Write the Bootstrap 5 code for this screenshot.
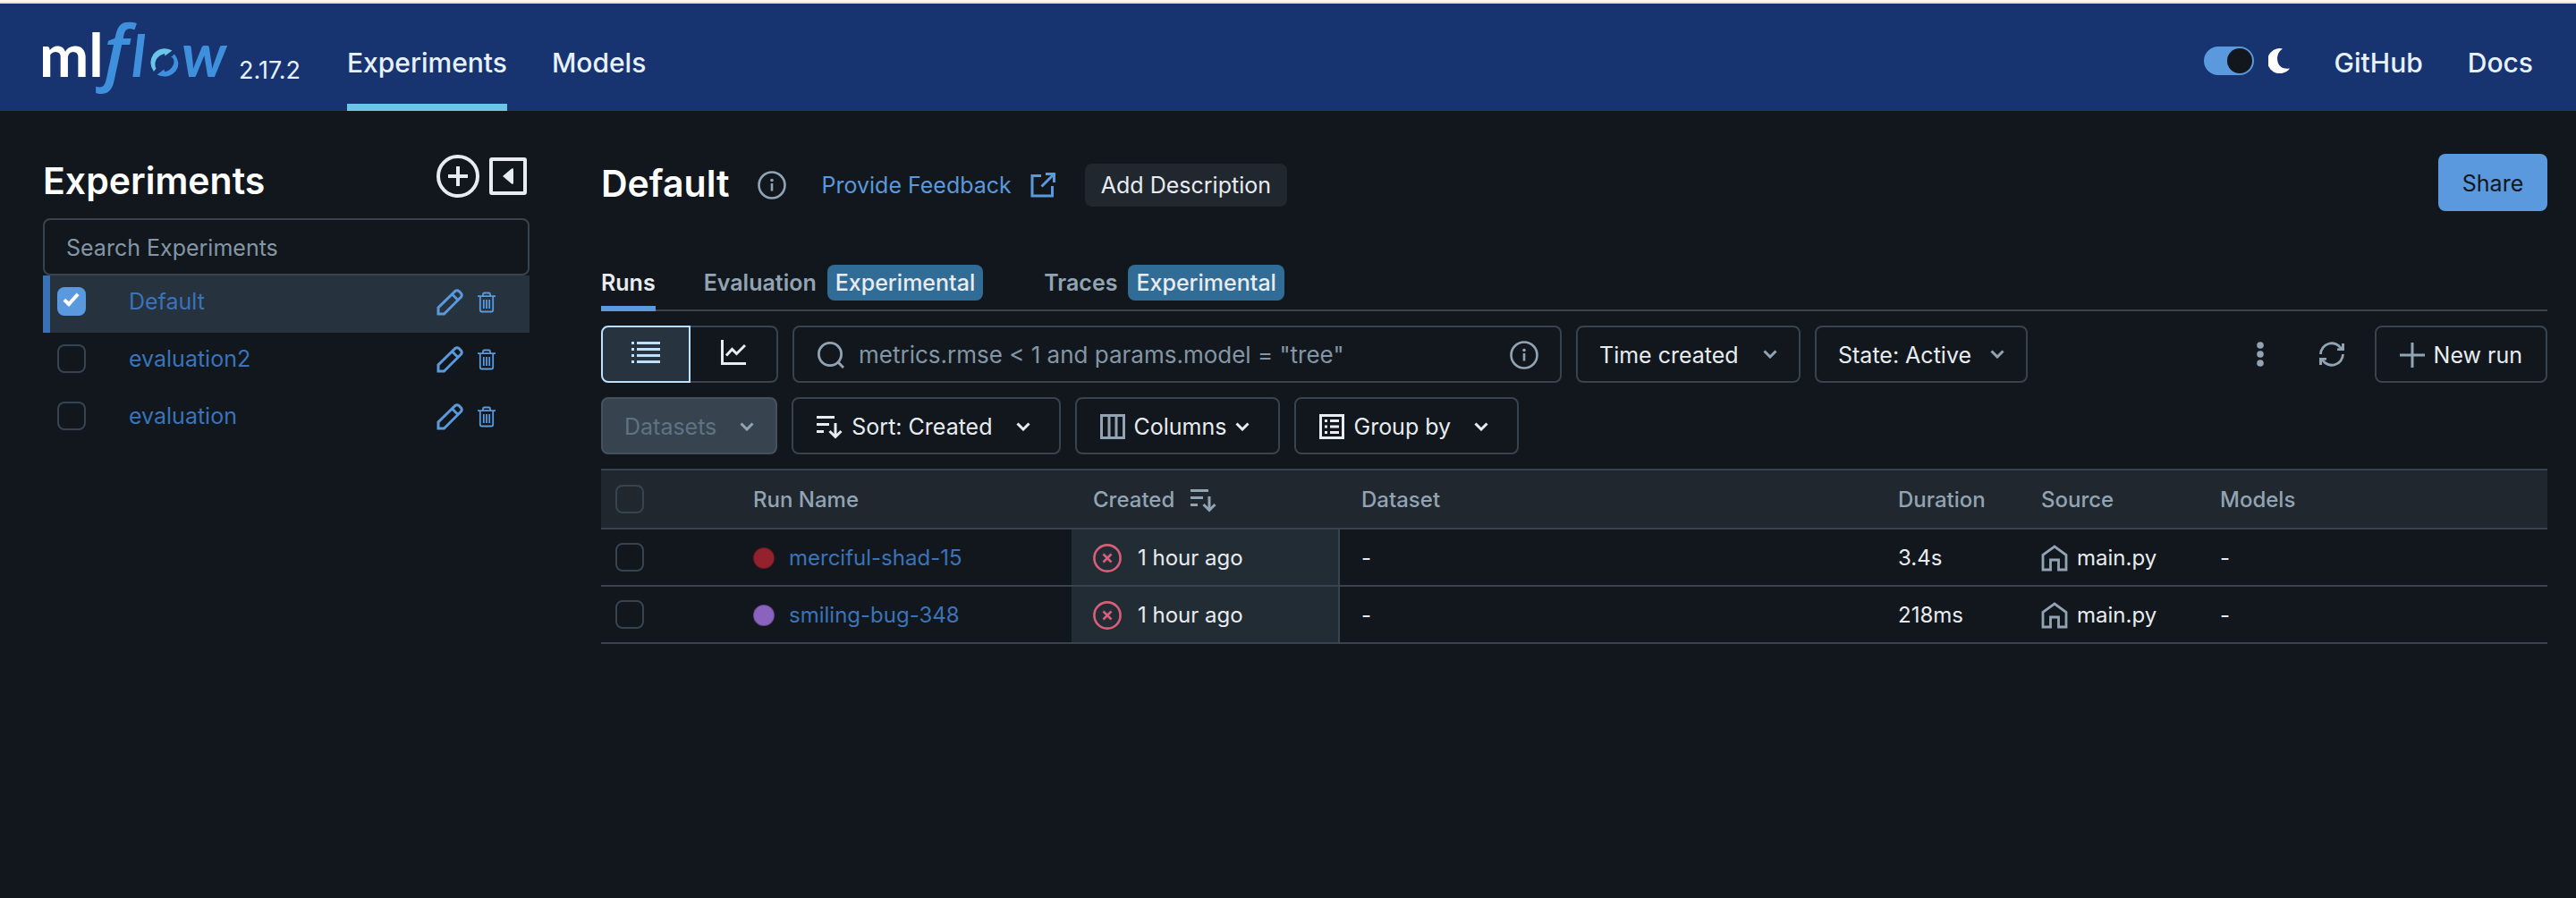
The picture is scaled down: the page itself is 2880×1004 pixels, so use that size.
<!DOCTYPE html>
<html lang="en" data-bs-theme="dark">
<head>
<meta charset="utf-8">
<meta name="viewport" content="width=device-width, initial-scale=1">
<title>MLflow - Experiments</title>
<link href="https://cdn.jsdelivr.net/npm/bootstrap@5.3.0/dist/css/bootstrap.min.css" rel="stylesheet">
<style>
  :root { --bg:#11171c; --line:#37444f; --ink:#e8ecf0; --muted:#92a4b3; --blue:#5a99dd; --link:#3b73b9; --panel:#20272e; }
  body { background:var(--bg); color:var(--ink); font-family:Inter,"Noto Sans",sans-serif; font-size:25px; line-height:32px; }
  svg { display:block; flex:none; }
  a { text-decoration:none; }
  .ico { fill:none; stroke:currentColor; stroke-width:4; }

  .topbar { height:124px; background:#183470; border-top:2px solid #fdf9ee; box-shadow:inset 0 2px #e8dfcf; padding:2px 48px 0 40px; }
  .brandbox { width:348px; }
  .brandbox svg { overflow:visible; }
  .version { font-size:27px; padding:59px 0 0 11px; color:#e7f1fb; }
  .topbar .toplink { color:#e7f1fb; font-size:30px; font-weight:500; line-height:40px; padding:46px 0 26px; border-bottom:8px solid transparent; }
  .topbar .toplink.active { border-color:#6bc5e8; }
  .topnav { gap:50px; }
  .modebox { padding-top:48px; }
  .mode { width:56px; height:32px; appearance:none; background:var(--blue); border-radius:16px; margin:0; display:block; }
  .mode::after { content:""; display:block; width:28px; height:28px; border-radius:50%; background:var(--bg); margin:2px 2px 0 26px; }

  .page { padding:48px 32px 0 48px; gap:80px; }
  .side { width:544px; flex:none; }
  h1, h2 { font-size:41px; font-weight:600; line-height:60px; margin:0; }
  .sidehead { height:72px; }
  .plainbtn { background:none; border:0; padding:0; color:inherit; display:block; }
  .soft { color:var(--muted); }
  .box { height:64px; border:2px solid var(--line); border-radius:8px; background:transparent; color:var(--ink); font-size:25px; line-height:32px; }
  .box::placeholder, .searchbox input::placeholder { color:#8496a5; opacity:1; }
  input.box { padding:2px 24px 0; width:100%; display:block; }
  .exp { height:64px; padding:0 38px 6px 8px; border-left:8px solid transparent; }
  .exp.active { background:#26323d; border-color:#3a70b4; }
  .exp label { margin-left:48px; color:var(--link); }
  .runs a { color:var(--link); }
  .exp .plainbtn { color:var(--blue); padding-top:2px; }
  .tick { appearance:none; width:32px; height:32px; border:2px solid var(--line); border-radius:8px; margin:0; display:block; flex:none; background:transparent; }
  .tick:checked { background:var(--blue); border-color:var(--blue); }
  .tick:checked::after { content:""; display:block; width:9px; height:17px; margin:2px 0 0 9px; border:solid #fff; border-width:0 4px 4px 0; transform:rotate(42deg); }

  .titlerow { height:64px; padding-top:2px; }
  .titlerow > :not(h1) { margin-top:4px; }
  .titlerow .plainbtn { margin-left:31px; margin-right:40px; }
  .feedback { color:var(--blue); gap:20px; }
  .desc { height:48px; margin-left:32px; padding:0 18px; background:var(--panel); border:0; border-radius:8px; color:var(--ink); }
  .share { width:122px; height:64px; padding-top:2px; background:var(--blue); border:0; border-radius:8px; color:var(--bg); }
  .tabbar { margin-top:54px; border-bottom:2px solid var(--line); gap:54px; }
  .tabbar .tab { height:58px; margin-bottom:-2px; border:0; border-bottom:6px solid transparent; background:none; padding:0; font-weight:600; color:var(--muted); display:flex; align-items:center; gap:12px; }
  .tabbar .tab.active { color:var(--ink); border-color:var(--blue); }
  .chip { background:#316c96; color:var(--ink); font-weight:500; height:40px; line-height:40px; border-radius:8px; padding:0 9px; margin-right:14px; }

  .tools { gap:16px; margin-top:16px; }
  .tools .box { display:flex; align-items:center; padding:2px 24px 0; white-space:nowrap; }
  .tools button.box { padding:2px 26px 0; }
  .tools .box > .lead-ico { margin-right:10px; }
  .chev { margin-left:26px; }
  .tools button.wideend { padding-right:32px; }
  .tools .near { margin-left:10px; }
  .seg { width:198px; }
  .tools .seg .box { flex:1; justify-content:center; padding:0; border-radius:0 8px 8px 0; border-left:0; }
  .tools .seg .box.active { border:2px solid #bde1fd; border-radius:8px 0 0 8px; background:#283340; color:#bde1fd; }
  .tools .searchbox { flex:0 1 860px; padding-left:26px; color:var(--muted); }
  .searchbox input { flex:1; min-width:0; background:none; border:0; color:var(--ink); padding:0 0 0 16px; outline:0; font-size:26px; }
  .pick { display:grid; align-items:center; }
  .pick > * { grid-area:1/1; }
  .tools .pick select { appearance:none; padding-right:67px; }
  .tools .pick.tight select { padding-right:60px; }
  .pick .chev { justify-self:end; margin-right:26px; color:var(--muted); pointer-events:none; }
  .tools .box:disabled { background:var(--line); border-color:#45525e; color:#5f7281; opacity:1; padding:2px 24px 0; }
  .sq { width:64px; height:64px; display:flex; align-items:center; justify-content:center; color:var(--muted); }

  .runs { width:100%; table-layout:fixed; border-collapse:separate; border-spacing:0; margin-top:16px; font-size:24px; }
  .runs th, .runs td { padding:2px 0 0 24px; vertical-align:middle; border-bottom:2px solid var(--line); }
  .runs th { height:68px; background:var(--panel); border-top:2px solid var(--line); font-weight:500; color:var(--muted); }
  .runs td { height:64px; }
  .runs .pickcol { padding:0 0 0 16px; width:146px; }
  .runs .created { background:#222c35; border-right:2px solid var(--line); }
  .wname { width:380px; } .wcreated { width:300px; } .wdata { width:600px; } .wdur { width:160px; } .wsrc { width:200px; }
  .cell { display:flex; align-items:center; gap:18px; }
  .cell.snug { gap:10px; }
  .dot { width:24px; height:24px; border-radius:50%; border:1px solid #0004; }
  .failico { color:#d95f78; }
</style>
<script src="https://cdn.jsdelivr.net/npm/bootstrap@5.3.0/dist/js/bootstrap.bundle.min.js"></script>
</head>
<body>
<svg width="0" height="0" class="position-absolute" aria-hidden="true">
  <symbol id="pencil" viewBox="0 0 30 30"><path d="M2 28v-7L21 2.500q2-1.500 4 0l2.500 2.500q1.500 2 0 4L8.500 28zM17.500 6l6.500 6.500" fill="none" stroke="currentColor" stroke-width="3"/></symbol>
  <symbol id="trash" viewBox="0 0 20 24"><path d="M0 5.200h20M6 5V3q0-1.500 1.500-1.500h5Q14 1.500 14 3v2M2.800 6v14.500q0 2 2 2h10.400q2 0 2-2V6M6.800 9v10M10 9v10M13.200 9v10" fill="none" stroke="currentColor" stroke-width="1.800"/></symbol>
  <symbol id="info" viewBox="0 0 32 32"><circle cx="16" cy="16" r="14.500" fill="none" stroke="currentColor" stroke-width="2.600"/><path d="M16 14v8.500" stroke="currentColor" stroke-width="2.600"/><circle cx="16" cy="10.500" r="1.800" fill="currentColor"/></symbol>
  <symbol id="chev" viewBox="0 0 16 10"><path d="M1.500 1.500L8 8l6.500-6.500" fill="none" stroke="currentColor" stroke-width="3"/></symbol>
  <symbol id="sort" viewBox="0 0 29 28"><path d="M0 3.500h20M0 11.500h14M0 19.500h8M21 10v15M14.500 19l6.500 6.500 6.500-6.500" fill="none" stroke="currentColor" stroke-width="3"/></symbol>
  <symbol id="fail" viewBox="0 0 32 32"><circle cx="16" cy="16" r="14.600" fill="none" stroke="currentColor" stroke-width="2.600"/><path d="M11.500 11.500l9 9M20.500 11.500l-9 9" stroke="currentColor" stroke-width="2.600"/></symbol>
  <symbol id="home" viewBox="0 0 30 30"><path d="M2 28V11.500L15 2l13 9.500V28h-8.500V17h-9v11z" fill="none" stroke="currentColor" stroke-width="2.800"/></symbol>
</svg>

<header class="topbar d-flex">
  <div class="brandbox d-flex align-items-start">
    <svg width="216" height="116" viewBox="40 4 216 116" role="img" aria-label="mlflow">
      <g font-family="Lato" font-weight="700">
        <text x="44" y="86" font-size="66" fill="#fff">ml</text>
        <g fill="#3f90dc">
          <text x="116" y="86" font-size="80" font-family="Open Sans" font-style="italic" font-weight="600">f</text>
          <text x="147" y="86" font-size="65" font-style="italic">l</text>
          <text x="203" y="86" font-size="68" font-style="italic">w</text>
        </g>
      </g>
      <path d="M172 80 Q165 70 171.500 60.500 Q180 50.500 192.500 56.500 L184.500 62.500 L184 60 Q178 61.500 175 66 Q172 71.500 174.500 76.500z" fill="#6bc5e8"/>
      <path d="M195 60.500 Q203 70.500 196.500 79.500 Q188 89 175.500 83.500 L183.500 77.500 L184 80.300 Q190 79.500 193 74 Q196 69 193 64.500 L191 64z" fill="#3f90dc"/>
    </svg>
    <span class="version">2.17.2</span>
  </div>
  <nav class="topnav d-flex align-items-start">
    <a class="toplink active" href="#">Experiments</a>
    <a class="toplink" href="#">Models</a>
  </nav>
  <nav class="topnav d-flex align-items-start ms-auto">
    <div class="modebox d-flex align-items-center gap-3">
      <input type="checkbox" class="mode" role="switch" aria-label="Dark mode" checked>
      <svg width="24" height="28" viewBox="0 0 24 28"><path d="M16 .500A14 14 0 1 0 24 22.500Q10 24 10 10.500Q10.500 4 16 .500z" fill="#fff"/></svg>
    </div>
    <a class="toplink" href="#">GitHub</a>
    <a class="toplink" href="#">Docs</a>
  </nav>
</header>

<div class="page d-flex align-items-start">
  <aside class="side">
    <div class="sidehead d-flex justify-content-between align-items-start">
      <h2>Experiments</h2>
      <div class="d-flex align-items-center gap-2">
        <button class="plainbtn" aria-label="New experiment"><svg width="50" height="50" viewBox="0 0 50 50"><circle cx="24" cy="25" r="22" class="ico"/><path d="M24 14v22M13 25h22" class="ico"/></svg></button>
        <button class="plainbtn" aria-label="Collapse sidebar"><svg width="46" height="50" viewBox="0 0 46 50"><rect x="3" y="6" width="38" height="38" rx="1" class="ico"/><path d="M16 25l10-8.500q2-1 2 1v15q0 2-2 1z" fill="currentColor"/></svg></button>
      </div>
    </div>
    <input class="box" type="text" placeholder="Search Experiments" aria-label="Search Experiments">
    <div class="exp active d-flex align-items-center">
      <input class="tick" type="checkbox" id="e0" checked><label for="e0">Default</label>
      <button class="plainbtn ms-auto" aria-label="Rename"><svg width="30" height="30"><use href="#pencil"/></svg></button>
      <button class="plainbtn ms-3" aria-label="Delete"><svg width="20" height="24"><use href="#trash"/></svg></button>
    </div>
    <div class="exp d-flex align-items-center">
      <input class="tick" type="checkbox" id="e1"><label for="e1">evaluation2</label>
      <button class="plainbtn ms-auto" aria-label="Rename"><svg width="30" height="30"><use href="#pencil"/></svg></button>
      <button class="plainbtn ms-3" aria-label="Delete"><svg width="20" height="24"><use href="#trash"/></svg></button>
    </div>
    <div class="exp d-flex align-items-center">
      <input class="tick" type="checkbox" id="e2"><label for="e2">evaluation</label>
      <button class="plainbtn ms-auto" aria-label="Rename"><svg width="30" height="30"><use href="#pencil"/></svg></button>
      <button class="plainbtn ms-3" aria-label="Delete"><svg width="20" height="24"><use href="#trash"/></svg></button>
    </div>
  </aside>

  <main class="flex-grow-1">
    <div class="d-flex align-items-start">
      <div class="titlerow d-flex align-items-center">
        <h1>Default</h1>
        <button class="plainbtn soft" aria-label="Info"><svg width="32" height="32"><use href="#info"/></svg></button>
        <a class="feedback d-flex align-items-center" href="#">Provide Feedback
          <svg width="30" height="30" viewBox="0 0 30 30"><path d="M13 4.500H3V27h22.500V16M18 2.500h9.500V12M27 3L13.500 16.500" fill="none" stroke="currentColor" stroke-width="3"/></svg></a>
        <button class="desc">Add Description</button>
      </div>
      <button class="share ms-auto">Share</button>
    </div>

    <div class="tabbar d-flex" role="tablist">
      <button class="tab active" role="tab">Runs</button>
      <button class="tab" role="tab">Evaluation <span class="chip">Experimental</span></button>
      <button class="tab" role="tab">Traces <span class="chip">Experimental</span></button>
    </div>

    <div class="tools d-flex">
      <div class="seg d-flex" role="group" aria-label="View">
        <button class="box active" aria-label="Table view"><svg width="32" height="32" viewBox="0 0 32 32"><path d="M0 3.500h3M0 10.500h3M0 17.500h3M0 24.500h3M6 3.500h26M6 10.500h26M6 17.500h26M6 24.500h26" stroke="currentColor" stroke-width="3"/></svg></button>
        <button class="box" aria-label="Chart view"><svg width="28" height="32" viewBox="0 0 28 32"><path d="M1.500 0v26.500H28M6 17.500l6.500-7 5 5L27 6" fill="none" stroke="currentColor" stroke-width="3"/></svg></button>
      </div>
      <div class="box searchbox">
        <svg width="30" height="32" viewBox="0 0 30 32"><circle cx="14" cy="15" r="12.600" fill="none" stroke="currentColor" stroke-width="2.800"/><path d="M23 24l6 6" stroke="currentColor" stroke-width="3"/></svg>
        <input type="text" placeholder="metrics.rmse &lt; 1 and params.model = &quot;tree&quot;" aria-label="Search runs">
        <button class="plainbtn" aria-label="Search syntax"><svg width="32" height="32"><use href="#info"/></svg></button>
      </div>
      <div class="pick"><select class="box" aria-label="Time created"><option>Time created</option></select><svg class="chev" width="16" height="10"><use href="#chev"/></svg></div>
      <div class="pick tight"><select class="box" aria-label="State"><option>State: Active</option></select><svg class="chev" width="16" height="10"><use href="#chev"/></svg></div>
      <button class="plainbtn sq ms-auto" aria-label="More"><svg width="8" height="28" viewBox="0 0 8 28" fill="currentColor"><circle cx="4" cy="4" r="3.800"/><circle cx="4" cy="14" r="3.800"/><circle cx="4" cy="24" r="3.800"/></svg></button>
      <button class="plainbtn sq" aria-label="Refresh"><svg width="28" height="30" viewBox="0 0 28 30"><path d="M1.500 15A12.500 12.500 0 0 1 24.500 8.500M26.500 15A12.500 12.500 0 0 1 3.500 21.500" fill="none" stroke="currentColor" stroke-width="2.800"/><path d="M28 3v8h-8v-2.500l5-.500V3zM0 27v-8h8v2.500l-5 .500V27z" fill="currentColor"/></svg></button>
      <button class="box"><svg class="lead-ico soft" width="28" height="28" viewBox="0 0 28 28"><path d="M14 0v28M0 14h28" stroke="currentColor" stroke-width="3"/></svg>New run</button>
    </div>

    <div class="tools d-flex">
      <button class="box" disabled>Datasets<svg class="chev soft" width="16" height="10"><use href="#chev"/></svg></button>
      <button class="box wideend"><svg class="lead-ico" width="29" height="28"><use href="#sort"/></svg>Sort: Created<svg class="chev" width="16" height="10"><use href="#chev"/></svg></button>
      <button class="box wideend"><svg class="lead-ico soft" width="28" height="28" viewBox="0 0 28 28"><path d="M1.500 1.500h25v25h-25zM10 2v24M18 2v24" fill="none" stroke="currentColor" stroke-width="3"/></svg>Columns<svg class="chev near" width="16" height="10"><use href="#chev"/></svg></button>
      <button class="box wideend"><svg class="lead-ico" width="28" height="28" viewBox="0 0 28 28"><path d="M1.500 1.500h25v25h-25zM6 7.500h3M12 7.500h10M6 14h3M12 14h10M6 20.500h3M12 20.500h10" fill="none" stroke="currentColor" stroke-width="3"/></svg>Group by<svg class="chev" width="16" height="10"><use href="#chev"/></svg></button>
    </div>

    <table class="runs">
      <thead><tr>
        <th class="pickcol"><input class="tick" type="checkbox" aria-label="Select all"></th>
        <th class="wname">Run Name</th>
        <th class="wcreated"><span class="cell">Created <svg width="29" height="28"><use href="#sort"/></svg></span></th>
        <th class="wdata">Dataset</th><th class="wdur">Duration</th><th class="wsrc">Source</th><th>Models</th>
      </tr></thead>
      <tbody>
        <tr>
          <td class="pickcol"><input class="tick" type="checkbox" aria-label="Select merciful-shad-15"></td>
          <td><span class="d-flex align-items-center gap-3"><span class="dot" style="background:#93222f"></span><a href="#">merciful-shad-15</a></span></td>
          <td class="created"><span class="cell"><svg class="failico" width="32" height="32"><use href="#fail"/></svg>1 hour ago</span></td>
          <td>-</td><td>3.4s</td>
          <td><span class="cell snug"><svg class="soft" width="30" height="30"><use href="#home"/></svg>main.py</span></td>
          <td>-</td>
        </tr>
        <tr>
          <td class="pickcol"><input class="tick" type="checkbox" aria-label="Select smiling-bug-348"></td>
          <td><span class="d-flex align-items-center gap-3"><span class="dot" style="background:#8a63bf"></span><a href="#">smiling-bug-348</a></span></td>
          <td class="created"><span class="cell"><svg class="failico" width="32" height="32"><use href="#fail"/></svg>1 hour ago</span></td>
          <td>-</td><td>218ms</td>
          <td><span class="cell snug"><svg class="soft" width="30" height="30"><use href="#home"/></svg>main.py</span></td>
          <td>-</td>
        </tr>
      </tbody>
    </table>
  </main>
</div>
</body>
</html>
